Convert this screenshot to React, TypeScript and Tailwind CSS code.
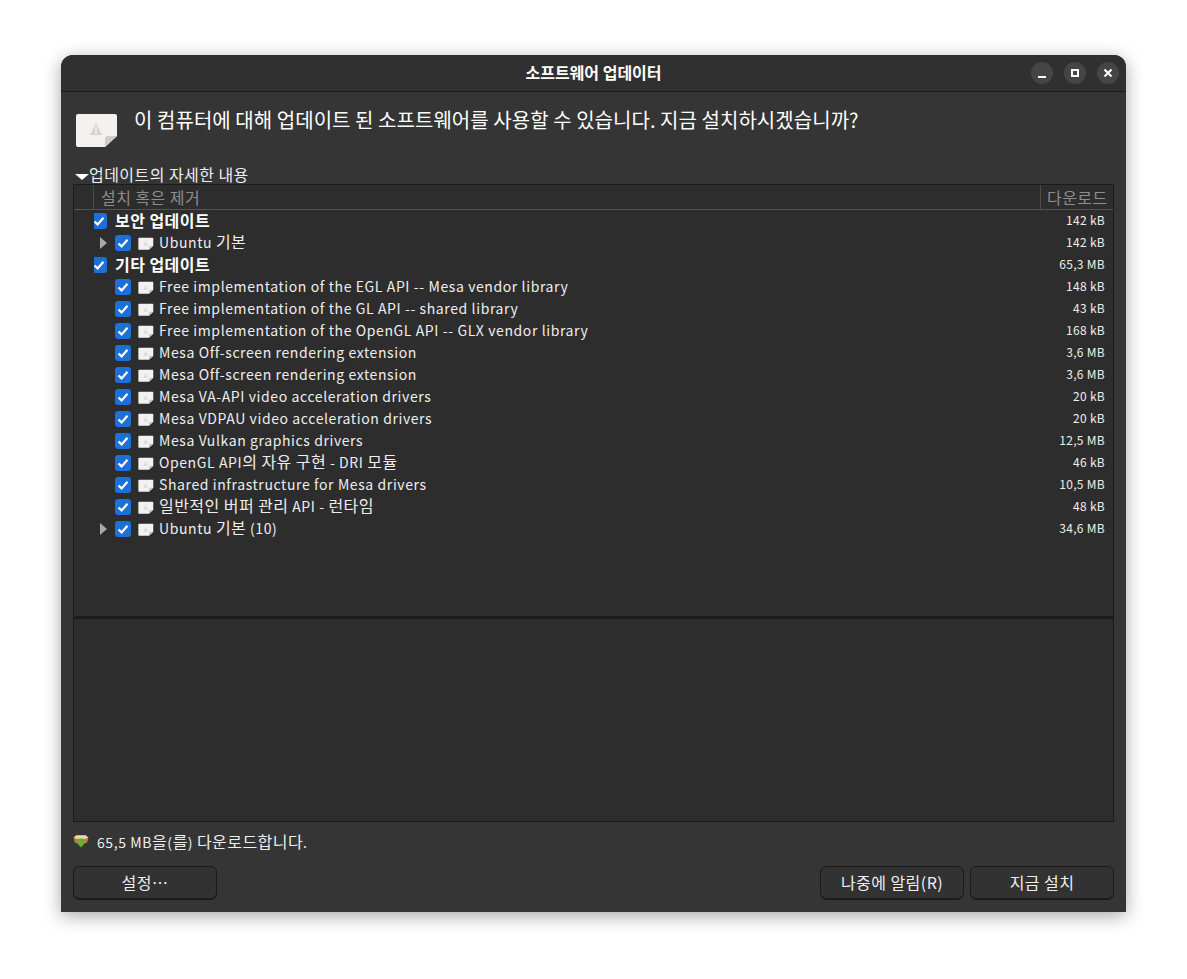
const FONT = "font-['Noto_Sans_CJK_KR','Noto_Sans',sans-serif]";

type Row = { label: string; size: string; level: 0 | 1; arrow?: boolean };

const rows: Row[] = [
  { label: '보안 업데이트', size: '142 kB', level: 0 },
  { label: 'Ubuntu 기본', size: '142 kB', level: 1, arrow: true },
  { label: '기타 업데이트', size: '65,3 MB', level: 0 },
  { label: 'Free implementation of the EGL API -- Mesa vendor library', size: '148 kB', level: 1 },
  { label: 'Free implementation of the GL API -- shared library', size: '43 kB', level: 1 },
  { label: 'Free implementation of the OpenGL API -- GLX vendor library', size: '168 kB', level: 1 },
  { label: 'Mesa Off-screen rendering extension', size: '3,6 MB', level: 1 },
  { label: 'Mesa Off-screen rendering extension', size: '3,6 MB', level: 1 },
  { label: 'Mesa VA-API video acceleration drivers', size: '20 kB', level: 1 },
  { label: 'Mesa VDPAU video acceleration drivers', size: '20 kB', level: 1 },
  { label: 'Mesa Vulkan graphics drivers', size: '12,5 MB', level: 1 },
  { label: 'OpenGL API의 자유 구현 - DRI 모듈', size: '46 kB', level: 1 },
  { label: 'Shared infrastructure for Mesa drivers', size: '10,5 MB', level: 1 },
  { label: '일반적인 버퍼 관리 API - 런타임', size: '48 kB', level: 1 },
  { label: 'Ubuntu 기본 (10)', size: '34,6 MB', level: 1, arrow: true },
];

// Hangul runs sit a size above the latin text in the reference font
function Mixed({ text }: { text: string }) {
  return (
    <>
      {text.split(/([가-힣]+(?: [가-힣]+)*)/).map((part, i) =>
        /[가-힣]/.test(part) ? (
          <span key={i} className="text-[16px] tracking-[0.45px]">
            {part}
          </span>
        ) : (
          <span key={i} className="text-[14px] tracking-[0.6px]">
            {part}
          </span>
        ),
      )}
    </>
  );
}

function Check() {
  return (
    <span className="flex h-4 w-4 shrink-0 items-center justify-center rounded-[3px] bg-[#1c71d8]">
      <svg width="12" height="12" viewBox="0 0 12 12" fill="none">
        <path d="M1.5 6.5 L4.6 9.4 L10.5 2.8" stroke="#fff" strokeWidth="2.2" />
      </svg>
    </span>
  );
}

function PackageIcon({ large }: { large?: boolean }) {
  return (
    <svg width={large ? 44 : 16} height={large ? 36 : 14} viewBox="0 0 44 36" className="shrink-0">
      <path d="M3 1 H40 a2 2 0 0 1 2 2 V23 L30 34 H3 a2 2 0 0 1 -2 -2 V3 a2 2 0 0 1 2 -2 Z" fill="#f3f2f0" />
      <path d="M42 23 L30 34 V26 a3 3 0 0 1 3 -3 Z" fill="#cfcdc9" />
      <path d="M21 10 L27 22 H15 Z" fill="#d6d4d1" />
      <rect x="20.2" y="14" width="1.7" height="4.5" fill="#f3f2f0" />
      <rect x="20.2" y="19.2" width="1.7" height="1.7" fill="#f3f2f0" />
    </svg>
  );
}

function UpdateRow({ row }: { row: Row }) {
  return (
    <div className="flex h-[22px] items-center pr-2">
      {row.level === 0 ? (
        <>
          <span className="ml-5 flex w-[13px] justify-end overflow-hidden">
            <Check />
          </span>
          <span className="ml-2 flex-1 pb-[2px] text-[16px] leading-[20px] font-bold tracking-[0.45px] text-white">{row.label}</span>
        </>
      ) : (
        <>
          <span className="ml-[26px] flex w-[15px] shrink-0 items-center">
            {row.arrow && <span className="h-0 w-0 border-y-[6px] border-l-[7px] border-y-transparent border-l-[#a8a8a8]" />}
          </span>
          <Check />
          <span className="ml-[7px] mt-[2px]">
            <PackageIcon />
          </span>
          <span className="ml-[5px] flex-1 pb-[4px] leading-[18px] text-[#eeeeee]">
            <Mixed text={row.label} />
          </span>
        </>
      )}
      <span className="pb-[2px] text-[12px] tracking-[0.3px] text-[#eeeeee]">{row.size}</span>
    </div>
  );
}

function WindowButton({ children }: { children: React.ReactNode }) {
  return <span className="flex h-[22px] w-[22px] items-center justify-center rounded-full bg-[#454545]">{children}</span>;
}

function ActionButton({ label }: { label: string }) {
  return (
    <button className="h-[34px] w-[144px] rounded-[6px] border border-[#1b1b1b] bg-[#323232] pb-[2px] text-[16px] tracking-[0.45px] text-[#eeeeee] shadow-[inset_0_-1px_0_#1b1b1b]">
      {label}
    </button>
  );
}

export default function App() {
  return (
    <div className={`min-h-[979px] bg-white pt-[55px] pl-[61px] ${FONT}`}>
      <div className="flex h-[857px] w-[1065px] flex-col overflow-hidden rounded-t-[12px] bg-[#353535] shadow-[0_4px_18px_rgba(0,0,0,0.35)]">
        {/* Title bar */}
        <header className="relative flex h-[37px] shrink-0 items-center justify-center border-b border-[#1b1b1b] bg-[#303030]">
          <span className="pb-[2px] text-[16px] font-bold text-white">소프트웨어 업데이터</span>
          <div className="absolute right-[7px] top-[7px] flex gap-[11px]">
            <WindowButton>
              <span className="mt-[7px] h-[2px] w-2 bg-white" />
            </WindowButton>
            <WindowButton>
              <span className="h-2 w-2 border-2 border-white" />
            </WindowButton>
            <WindowButton>
              <svg width="10" height="10" viewBox="0 0 10 10">
                <path d="M1.5 1.5 L8.5 8.5 M8.5 1.5 L1.5 8.5" stroke="#fff" strokeWidth="2" />
              </svg>
            </WindowButton>
          </div>
        </header>

        <div className="flex flex-1 flex-col px-3">
          {/* Question */}
          <div className="flex h-[75px] shrink-0 items-start">
            <span className="ml-[2px] mt-[21px]">
              <PackageIcon large />
            </span>
            <p className="ml-[15px] mt-[14px] text-[20px] leading-[28px] tracking-[0.05px] text-white">
              이 컴퓨터에 대해 업데이트 된 소프트웨어를 사용할 수 있습니다. 지금 설치하시겠습니까?
            </p>
          </div>

          {/* Expander */}
          <div className="flex h-[17px] shrink-0 items-center text-[#eeeeee]">
            <span className="ml-[2px] mt-[2px] h-0 w-0 border-x-[7px] border-t-[6px] border-x-transparent border-t-white" />
            <span className="pb-[2px] leading-[20px]">
              <Mixed text="업데이트의 자세한 내용" />
            </span>
          </div>

          {/* Update tree and details */}
          <div className="flex h-[638px] shrink-0 flex-col border border-[#1b1b1b] bg-[#2d2d2d]">
            <div className="flex h-[25px] shrink-0 items-center border-b border-[#545454] text-[#8e8e8e]">
              <div className="ml-[19px] flex h-full flex-1 items-center border-l border-[#4a4a4a] pl-[7px]">
                <Mixed text="설치 혹은 제거" />
              </div>
              <div className="flex h-full w-[73px] items-center border-l border-[#4a4a4a] pl-[6px]">
                <Mixed text="다운로드" />
              </div>
            </div>
            <div className="h-[406px] shrink-0">
              {rows.map((row, i) => (
                <UpdateRow key={i} row={row} />
              ))}
            </div>
            <div className="h-[3px] shrink-0 bg-[#1b1b1b]" />
            <div className="flex-1" />
          </div>

          {/* Status */}
          <div className="flex h-[44px] shrink-0 items-center pb-[6px] text-[#eeeeee]">
            <svg width="16" height="14" viewBox="0 0 16 14" className="shrink-0">
              <path d="M0.5 3.5 L3 1 H13 L15.5 3.5 L14 9 H2 Z" fill="#b9803c" />
              <path d="M1 3.5 L3.5 1.5 H12.5 L15 3.5 L12 5 H4 Z" fill="#f0d8ae" />
              <path d="M5.5 4.5 H10.5 V8 H13 L8 13.5 L3 8 H5.5 Z" fill="#6cae2f" />
            </svg>
            <span className="ml-2 leading-[20px]">
              <Mixed text="65,5 MB을(를) 다운로드합니다." />
            </span>
          </div>

          {/* Actions */}
          <div className="flex shrink-0 gap-[6px]">
            <ActionButton label="설정⋯" />
            <div className="flex-1" />
            <ActionButton label="나중에 알림(R)" />
            <ActionButton label="지금 설치" />
          </div>
        </div>
      </div>
    </div>
  );
}
